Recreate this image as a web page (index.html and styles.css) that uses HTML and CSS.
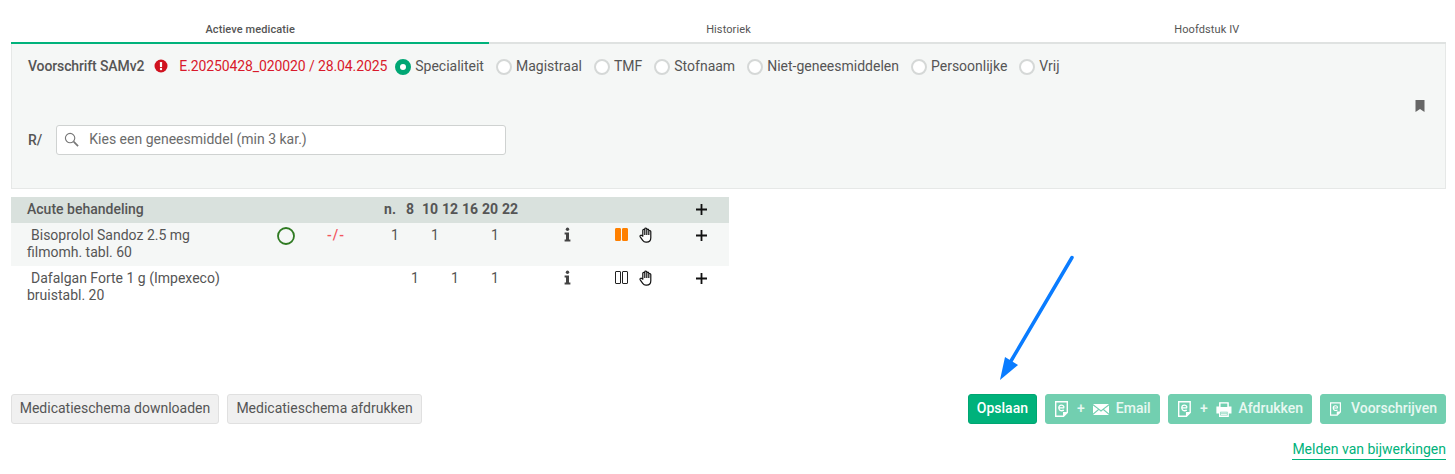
FILE: index.html
```html
<!DOCTYPE html>
<html lang="nl">
<head>
<meta charset="utf-8">
<title>Actieve medicatie</title>
<link rel="stylesheet" href="styles.css">
</head>
<body>
<div class="page">
  <nav class="tabs">
    <div class="tab active">Actieve medicatie</div>
    <div class="tab">Historiek</div>
    <div class="tab">Hoofdstuk IV</div>
  </nav>

  <section class="panel">
    <div class="rx-row">
      <span class="rx-label rx-title">Voorschrift SAMv2</span>
      <svg class="alert" viewBox="0 0 14 14"><circle cx="7" cy="7" r="6.5" fill="#d0121f"/><rect x="5.9" y="3" width="2.2" height="5" rx=".6" fill="#fff"/><circle cx="7" cy="10" r="1.2" fill="#fff"/></svg>
      <span class="rx-id">E.20250428_020020 / 28.04.2025</span>
      <label class="radio checked"><i></i>Specialiteit</label>
      <label class="radio"><i></i>Magistraal</label>
      <label class="radio"><i></i>TMF</label>
      <label class="radio"><i></i>Stofnaam</label>
      <label class="radio"><i></i>Niet-geneesmiddelen</label>
      <label class="radio"><i></i>Persoonlijke</label>
      <label class="radio"><i></i>Vrij</label>
    </div>
    <div class="bookmark-row">
      <svg class="bookmark" viewBox="0 0 10 12"><path d="M.5 0h9v12L5 9 .5 12z" fill="#666"/></svg>
    </div>
    <div class="search-row">
      <span class="rx-label">R/</span>
      <div class="search">
        <svg class="search-icon" viewBox="0 0 16 16"><circle cx="6.5" cy="6.5" r="5" fill="none" stroke="#777" stroke-width="1.2"/><path d="M10.3 10.3l4.7 4.7" stroke="#777" stroke-width="1.8"/></svg>
        <span>Kies een geneesmiddel (min 3 kar.)</span>
      </div>
    </div>
  </section>

  <section class="schedule">
    <div class="row head">
      <div class="name">Acute behandeling</div>
      <div class="c-n">n.</div><div class="c-8">8</div><div class="c-10">10</div><div class="c-12">12</div><div class="c-16">16</div><div class="c-20">20</div><div class="c-22">22</div>
      <div class="c-plus"><svg class="plus" viewBox="0 0 11 11"><path d="M5.5 0v11M0 5.5h11" stroke="#111" stroke-width="1.8"/></svg></div>
    </div>
    <div class="row tinted">
      <div class="name"><span class="drug">Bisoprolol Sandoz 2.5 mg</span><br>filmomh. tabl. 60</div>
      <div class="c-ring"><svg class="ring" viewBox="0 0 18 18"><circle cx="9" cy="9" r="8" fill="none" stroke="#2f7a22" stroke-width="1.8"/></svg></div>
      <div class="c-dash">-/-</div>
      <div class="c-n dose">1</div><div class="c-10 dose">1</div><div class="c-20 dose">1</div>
      <div class="c-info"><svg class="info" viewBox="0 0 7 14"><circle cx="3.5" cy="1.7" r="1.7" fill="#444"/><path d="M.6 5h4.4v7h1.4v2H.6v-2H2V7H.6z" fill="#444"/></svg></div>
      <div class="c-pause"><span class="pause on"><i></i><i></i></span></div>
      <div class="c-hand"><svg class="hand" viewBox="0 0 14 16"><path d="M3.8 9.2V3.3a1 1 0 0 1 2 0V2a1 1 0 0 1 2 0v1.2a1 1 0 0 1 2 0v1.3a1 1 0 0 1 2 0v6.3c0 2.6-1.6 4.4-4.2 4.4H7c-1.6 0-2.5-.7-3.3-1.9L1.2 9.8c-.7-1.2.8-2.2 1.6-1.2zM5.8 3v5M7.8 2.5V8M9.8 3.5V8" fill="#fff" stroke="#111" stroke-width="1.2" stroke-linejoin="round"/></svg></div>
      <div class="c-plus"><svg class="plus" viewBox="0 0 11 11"><path d="M5.5 0v11M0 5.5h11" stroke="#111" stroke-width="1.8"/></svg></div>
    </div>
    <div class="row">
      <div class="name"><span class="drug">Dafalgan Forte 1 g (Impexeco)</span><br>bruistabl. 20</div>
      <div class="c-8 dose">1</div><div class="c-12 dose">1</div><div class="c-20 dose">1</div>
      <div class="c-info"><svg class="info" viewBox="0 0 7 14"><circle cx="3.5" cy="1.7" r="1.7" fill="#444"/><path d="M.6 5h4.4v7h1.4v2H.6v-2H2V7H.6z" fill="#444"/></svg></div>
      <div class="c-pause"><span class="pause"><i></i><i></i></span></div>
      <div class="c-hand"><svg class="hand" viewBox="0 0 14 16"><path d="M3.8 9.2V3.3a1 1 0 0 1 2 0V2a1 1 0 0 1 2 0v1.2a1 1 0 0 1 2 0v1.3a1 1 0 0 1 2 0v6.3c0 2.6-1.6 4.4-4.2 4.4H7c-1.6 0-2.5-.7-3.3-1.9L1.2 9.8c-.7-1.2.8-2.2 1.6-1.2zM5.8 3v5M7.8 2.5V8M9.8 3.5V8" fill="#fff" stroke="#111" stroke-width="1.2" stroke-linejoin="round"/></svg></div>
      <div class="c-plus"><svg class="plus" viewBox="0 0 11 11"><path d="M5.5 0v11M0 5.5h11" stroke="#111" stroke-width="1.8"/></svg></div>
    </div>
  </section>

  <div class="actions">
    <div class="btn-group">
      <button class="btn plain w-download">Medicatieschema downloaden</button>
      <button class="btn plain w-print">Medicatieschema afdrukken</button>
    </div>
    <div class="btn-group">
      <button class="btn primary">Opslaan</button>
      <button class="btn primary faded w-email">
        <svg class="ico-doc" viewBox="0 0 13 16"><path d="M.7.7h11.6v10.800l-3.800 3.800H.7z" fill="none" stroke="#fff" stroke-width="1.4"/><path d="M8 15.500v-4.500h4.800z" fill="#fff"/><path d="M9.200 6.800H3.800c0-3.600 5.200-3.600 5.200-.2M3.900 7.200c.2 2.800 3 3 5 2" fill="none" stroke="#fff" stroke-width="1.3"/></svg>
        <span class="plus-text">+</span>
        <svg class="ico-mail" viewBox="0 0 16 11"><path d="M0 0h16L8 6.2zM0 1.4v8.2l5-4.3zM16 1.4v8.2l-5-4.3zM5.9 6l2.1 1.7L10.100 6 16 11H0z" fill="#fff"/></svg>
        <span class="btn-label">Email</span>
      </button>
      <button class="btn primary faded w-afdruk">
        <svg class="ico-doc" viewBox="0 0 13 16"><path d="M.7.7h11.6v10.800l-3.800 3.800H.7z" fill="none" stroke="#fff" stroke-width="1.4"/><path d="M8 15.500v-4.500h4.800z" fill="#fff"/><path d="M9.200 6.800H3.800c0-3.600 5.200-3.600 5.200-.2M3.900 7.200c.2 2.800 3 3 5 2" fill="none" stroke="#fff" stroke-width="1.3"/></svg>
        <span class="plus-text">+</span>
        <svg class="ico-print" viewBox="0 0 16 15"><path d="M3.700 5V.8h8.600V5M3.700 11H1V5h14v6h-2.700" fill="#fff" stroke="#fff" stroke-width="1.200"/><path d="M4.600 1.500h6.800V5H4.600z" fill="#72cfb0"/><path d="M3.700 9h8.600v5.300H3.700z" fill="#72cfb0" stroke="#fff" stroke-width="1.300"/><path d="M5 11h6M5 12.700h6" stroke="#fff"/></svg>
        <span class="btn-label">Afdrukken</span>
      </button>
      <button class="btn primary faded w-voor">
        <svg class="ico-doc" viewBox="0 0 13 16"><path d="M.7.7h11.6v10.800l-3.800 3.800H.7z" fill="none" stroke="#fff" stroke-width="1.4"/><path d="M8 15.500v-4.500h4.800z" fill="#fff"/><path d="M9.200 6.800H3.800c0-3.600 5.200-3.600 5.200-.2M3.900 7.200c.2 2.800 3 3 5 2" fill="none" stroke="#fff" stroke-width="1.3"/></svg>
        <span class="btn-label">Voorschrijven</span>
      </button>
    </div>
  </div>

  <div class="link-row"><a class="report-link" href="#">Melden van bijwerkingen</a></div>

  <svg class="arrow" viewBox="0 0 90 140"><path d="M72 7.500L11 111" stroke="#0a7cff" stroke-width="3.500" stroke-linecap="round"/><path d="M0 130L5 107 18 115z" fill="#0a7cff"/></svg>
</div>
</body>
</html>
```
FILE: styles.css
```css
* { box-sizing: border-box; }
html, body { margin: 0; background: #fff; }
body { font-family: Roboto, "Liberation Sans", sans-serif; font-size: 14px; color: #555; }
.page { position: relative; width: 1455px; height: 474px; padding: 19px 9px 0 11px; overflow: hidden; }

.tabs { display: grid; grid-template-columns: repeat(3, 1fr); height: 25px; border-bottom: 2px solid #dfe2e1; }
.tab { height: 25px; font-size: 11px; line-height: 21px; text-align: center; letter-spacing: .1px; color: #555; }
.tab.active { font-weight: 500; border-bottom: 2px solid #00b27b; }

.panel { height: 145px; background: #f5f7f6; border: 1px solid #e6e8e7; border-top: 0; padding: 0 16px; }
.rx-row { display: flex; align-items: center; height: 44px; }
.rx-label { font-weight: 500; color: #555; }
.rx-title { letter-spacing: -.12px; }
.alert { width: 14px; height: 14px; margin-left: 10px; }
.rx-id { margin-left: 11px; color: #d9192b; letter-spacing: -.11px; }
.radio { display: flex; align-items: center; margin-left: 12px; color: #555; }
.rx-id + .radio { margin-left: 8px; }
.radio i { width: 16px; height: 16px; margin-right: 4px; margin-top: 2px; border-radius: 50%; border: 2px solid #d5d8d7; background: #fff; }
.radio.checked i { border: 5px solid #00a674; }

.bookmark-row { display: flex; justify-content: flex-end; height: 37px; padding-right: 4px; padding-top: 12px; }
.bookmark { width: 10px; height: 12px; }

.search-row { display: flex; align-items: center; gap: 14px; }
.search { display: flex; align-items: center; width: 450px; height: 30px; padding: 0 0 2px 7px; background: #fff; border: 1px solid #cfd2d1; border-radius: 3px; color: #6b6b6b; }
.search-icon { width: 15px; height: 15px; margin-right: 10px; }

.schedule { width: 718px; margin-top: 8px; }
.row { display: grid; align-items: start; height: 43px; line-height: 17px;
  grid-template-columns: 254px 40px 60px 15px repeat(7, 20px) 27px 40px 23px 24px 24px 15px 56px;
  grid-template-rows: 1fr; }
.row > div { grid-row: 1; text-align: center; padding-top: 4px; }
.row > .name { grid-column: 1; text-align: left; padding-left: 16px; }
.drug { margin-left: 4px; }
.head { height: 26px; background: #d9e1dd; font-weight: 700; align-items: center; padding-bottom: 2px; }
.head > div { padding-top: 0; }
.head > .name { font-weight: 500; }
.head .plus { margin-top: 0; }
.tinted { background: #f5f7f6; }
.c-ring { grid-column: 2; padding-left: 2px; }
.c-dash { grid-column: 3; color: #f2565e; font-weight: 500; letter-spacing: 1px; padding-left: 2px; }
.c-n { grid-column: 5; }
.c-8 { grid-column: 6; }
.c-10 { grid-column: 7; }
.c-12 { grid-column: 8; }
.c-16 { grid-column: 9; }
.c-20 { grid-column: 10; }
.c-22 { grid-column: 11; }
.row > .dose { padding-left: 10px; }
.c-info { grid-column: 13; }
.c-pause { grid-column: 15; padding-right: 2px; }
.c-hand { grid-column: 16; }
.c-plus { grid-column: 18; }
.ring { display: block; width: 18px; height: 18px; margin: 0 auto; }
.info { display: block; width: 7px; height: 15px; margin: 0 auto; }
.plus { display: block; width: 11px; height: 11px; margin: 3px auto 0; }
.hand { display: block; width: 14px; height: 16px; margin: 0 auto; }
.pause { display: flex; justify-content: center; gap: 1px; margin-top: 1px; }
.pause i { width: 6px; height: 13px; border: 1.500px solid #222; border-radius: 1px; }
.pause.on i { background: #ff8000; border-color: #ff8000; }

.actions { display: flex; justify-content: space-between; margin-top: 85px; }
.btn-group { display: flex; gap: 8px; }
.btn { display: flex; align-items: center; height: 30px; padding: 0 8px 2px; font: 500 14px Roboto, "Liberation Sans", sans-serif; border-radius: 3px; border: 1px solid transparent; }
.plain { justify-content: center; background: #f0f0f0; border-color: #e0e0e0; color: #555; font-weight: 400; padding: 0 0 2px; }
.w-download { width: 208px; }
.w-print { width: 195px; }
.primary { background: #00b27b; color: #fff; border-color: #00a672; }
.faded { background: #72cfb0; border-color: #72cfb0; color: #e8f8f2; padding-left: 9px; }
.w-email { width: 115px; }
.w-afdruk { width: 144px; }
.w-voor { width: 126px; }
.ico-doc { width: 13px; height: 16px; margin-top: 2px; }
.plus-text { margin: 0 8px 0 9px; }
.ico-mail { width: 16px; height: 11px; margin-top: 2px; }
.ico-print { width: 16px; height: 15px; margin-top: 2px; }
.btn-label { margin-left: 7px; }
.ico-doc + .btn-label { margin-left: 10px; }

.link-row { display: flex; justify-content: flex-end; margin-top: 16px; }
.report-link { color: #00b27b; text-decoration: none; border-bottom: 1px solid #00b27b; line-height: 19px; height: 20px; }

.arrow { position: absolute; left: 1000px; top: 250px; width: 90px; height: 140px; }
```
